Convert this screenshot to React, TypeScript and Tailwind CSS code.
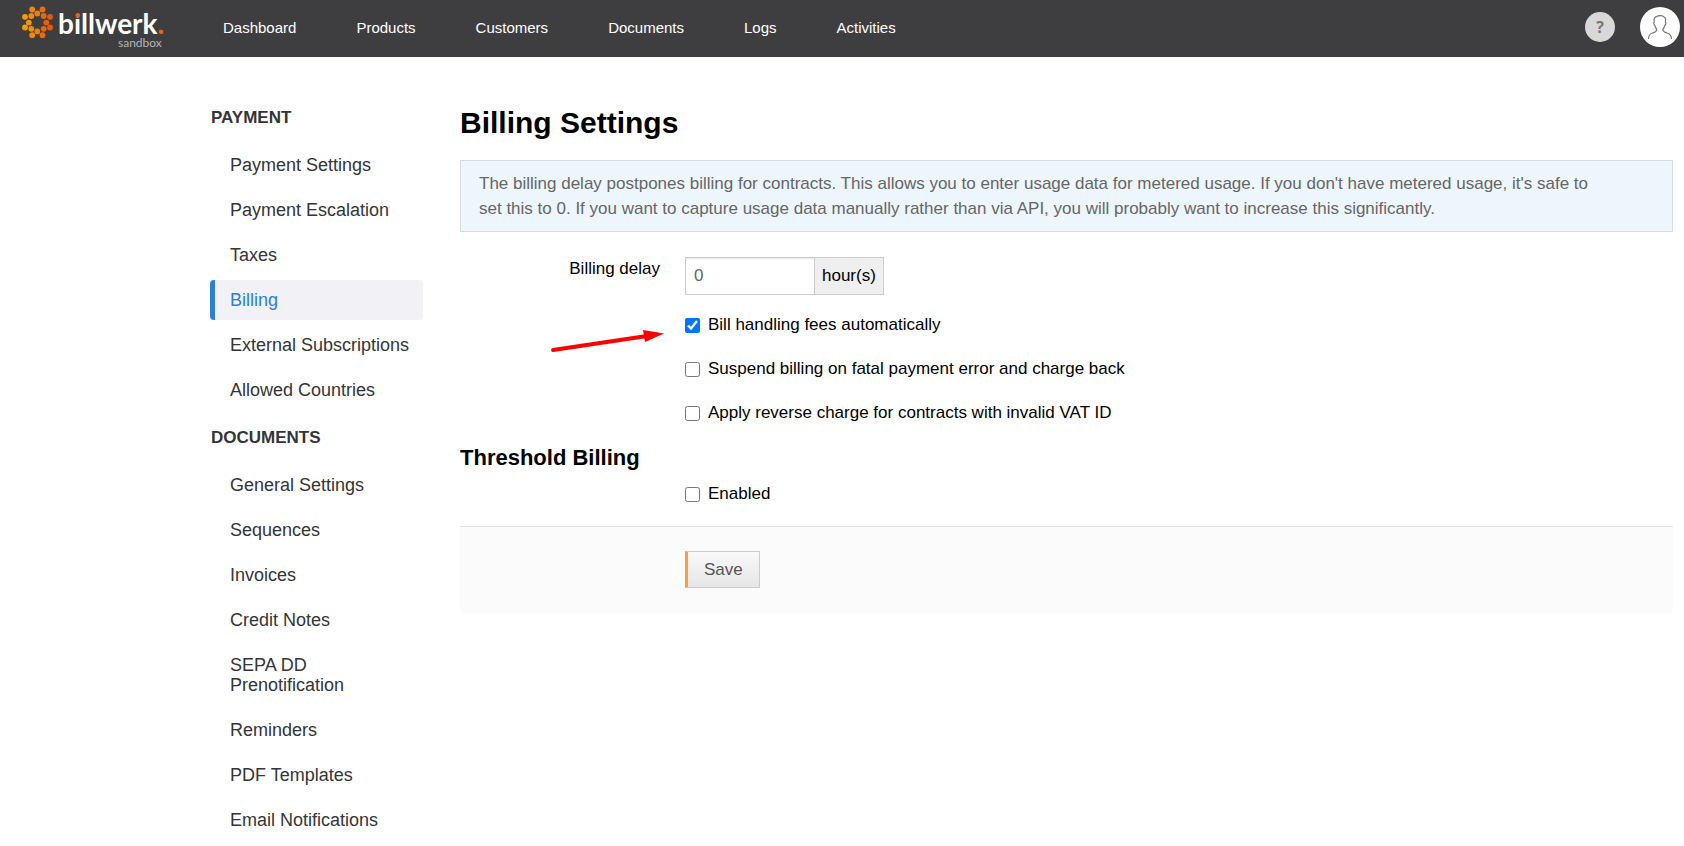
import type { ReactNode } from "react";

const navItems = ["Dashboard", "Products", "Customers", "Documents", "Logs", "Activities"];

const sections = [
  {
    title: "PAYMENT",
    items: [
      "Payment Settings",
      "Payment Escalation",
      "Taxes",
      "Billing",
      "External Subscriptions",
      "Allowed Countries",
    ],
  },
  {
    title: "DOCUMENTS",
    items: [
      "General Settings",
      "Sequences",
      "Invoices",
      "Credit Notes",
      "SEPA DD Prenotification",
      "Reminders",
      "PDF Templates",
      "Email Notifications",
    ],
  },
];

const dots = [
  { x: 32.2, y: 9.5, c: "#f08a00" },
  { x: 42.5, y: 9.5, c: "#ee6b0c" },
  { x: 37.3, y: 13.5, c: "#f07d05" },
  { x: 25, y: 16.8, c: "#f59c00" },
  { x: 31.3, y: 16, c: "#f28c00" },
  { x: 43.7, y: 16, c: "#ec6608" },
  { x: 50, y: 16.8, c: "#e8590c" },
  { x: 28.8, y: 22.6, c: "#f59600" },
  { x: 46.3, y: 22.6, c: "#ea600a" },
  { x: 25, y: 27.5, c: "#f59c00" },
  { x: 31.3, y: 28.8, c: "#f39200" },
  { x: 43.7, y: 28.8, c: "#ec6608" },
  { x: 50, y: 27.5, c: "#e8590c" },
  { x: 37.3, y: 31.4, c: "#f07d05" },
  { x: 32.2, y: 35.2, c: "#f08a00" },
  { x: 42.5, y: 35.2, c: "#ee6b0c" },
];

function Logo() {
  return (
    <a href="#" aria-label="billwerk sandbox" className="block shrink-0">
      <svg width="193" height="57" viewBox="0 0 193 57">
        <defs>
          {/* orange dot on the i, white stem */}
          <linearGradient id="dot" gradientUnits="userSpaceOnUse" x1="0" y1="0" x2="0" y2="57">
            <stop offset="0.3" stopColor="#ec6608" />
            <stop offset="0.3" stopColor="#fff" />
          </linearGradient>
        </defs>
        {dots.map((d) => (
          <circle key={`${d.x}-${d.y}`} cx={d.x} cy={d.y} r="2.9" fill={d.c} />
        ))}
        <text x="58" y="34" fontFamily="Lato, sans-serif" fontSize="28" fontWeight="700" fill="#fff">
          b<tspan fill="url(#dot)">i</tspan>llwerk<tspan fill="#ec6608">.</tspan>
        </text>
        <text x="118" y="47" fontFamily="Lato, sans-serif" fontSize="12" fill="#b5b5b5">
          sandbox
        </text>
      </svg>
    </a>
  );
}

function Header() {
  return (
    <header className="flex h-[57px] items-center bg-[#3e3e40]">
      <Logo />
      <nav className="flex flex-1 text-[15px] text-white">
        {navItems.map((item) => (
          <a key={item} href="#" className="px-[30px]">
            {item}
          </a>
        ))}
      </nav>
      <div className="flex items-center gap-[25px] pr-1 pb-[3px]">
        <button
          type="button"
          className="size-[30px] rounded-full bg-[#d8d8d8] font-['Open_Sans',sans-serif] text-base font-bold text-[#77777a]"
        >
          ?
        </button>
        <button
          type="button"
          aria-label="Account"
          className="flex size-10 items-center justify-center rounded-full bg-white"
        >
          <svg width="26" height="26" viewBox="0 0 26 26" fill="none" stroke="#77777a" strokeWidth="1.2">
            <path d="M1.500 25c0-4 1.200-5 4-6 2.700-.9 4.200-1.300 4.200-3.300 0-1-1.500-2.200-1.900-4.400-1-.4-1.500-2.800-.6-3.400C6.600 4.500 7.700 2.900 9.600 2.600c2.200-1.600 6-1.300 7.500.4 1.600.8 1.700 2.900 1.300 4.900.9.600.4 3-.6 3.400-.4 2.200-1.900 3.400-1.900 4.400 0 2 1.500 2.400 4.200 3.300 2.800 1 4.400 2 4.400 6" />
          </svg>
        </button>
      </div>
    </header>
  );
}

function Sidebar() {
  return (
    <aside className="w-[213px] shrink-0 pt-[51px] text-lg leading-5 text-[#333538]">
      {sections.map((section) => (
        <section key={section.title} className="mb-[18px]">
          <h2 className="mb-[17px] pl-px text-[17px] leading-5 font-bold">{section.title}</h2>
          <ul className="flex flex-col gap-[5px]">
            {section.items.map((item) => (
              <li key={item}>
                <a
                  href="#"
                  className={
                    item === "Billing"
                      ? "block rounded-[4px] border-l-[5px] border-[#2f7ed8] bg-[#f1f1f6] py-[10px] pr-1 pl-[15px] text-[#2f7ed8]"
                      : "block border-l-[5px] border-transparent py-[10px] pr-1 pl-[15px]"
                  }
                >
                  {item}
                </a>
              </li>
            ))}
          </ul>
        </section>
      ))}
    </aside>
  );
}

function CheckRow({ children, checked = false }: { children: ReactNode; checked?: boolean }) {
  return (
    <label className="flex w-fit items-center gap-2 leading-6">
      <input type="checkbox" defaultChecked={checked} className="size-[15px]" />
      {children}
    </label>
  );
}

function Arrow() {
  return (
    <svg className="absolute top-[17px] left-[-136px]" width="116" height="24" viewBox="0 0 116 24">
      <path d="M4 20 98 6" stroke="#f00" strokeWidth="4" strokeLinecap="round" />
      <path d="M94 0 115 3.500 96 12z" fill="#f00" />
    </svg>
  );
}

export default function App() {
  return (
    <div className="min-h-screen bg-white font-['Liberation_Sans',Arial,sans-serif] text-black">
      <Header />
      <div className="flex gap-[37px] pr-[11px] pl-[210px]">
        <Sidebar />
        <main className="min-w-0 flex-1 pt-[46px] text-[17px]">
          <h1 className="text-[30px] leading-10 font-bold">Billing Settings</h1>
          <p className="mt-[17px] border border-[#d9dcde] bg-[#edf6fc] py-[10px] pr-[60px] pl-[18px] leading-[25px] text-[#666]">
            The billing delay postpones billing for contracts. This allows you to enter usage data for
            metered usage. If you don't have metered usage, it's safe to set this to 0. If you want to
            capture usage data manually rather than via API, you will probably want to increase this
            significantly.
          </p>
          <form onSubmit={(e) => e.preventDefault()}>
            <div className="mt-[25px] flex gap-[25px]">
              <label htmlFor="delay" className="w-[200px] shrink-0 text-right leading-6">
                Billing delay
              </label>
              <div className="flex h-[38px] border border-[#ccc]">
                <input
                  id="delay"
                  type="text"
                  defaultValue="0"
                  className="w-[129px] border-r border-[#ccc] px-2 text-[#666] shadow-[inset_0_1px_1px_rgba(0,0,0,0.08)]"
                />
                <span className="flex items-center bg-[#efefef] px-[7px]">hour(s)</span>
              </div>
            </div>
            <div className="relative mt-[18px] ml-[225px] flex flex-col gap-5">
              <Arrow />
              <CheckRow checked>Bill handling fees automatically</CheckRow>
              <CheckRow>Suspend billing on fatal payment error and charge back</CheckRow>
              <CheckRow>Apply reverse charge for contracts with invalid VAT ID</CheckRow>
            </div>
            <h2 className="mt-[21px] text-[22px] leading-6 font-bold">Threshold Billing</h2>
            <div className="mt-3 ml-[225px]">
              <CheckRow>Enabled</CheckRow>
            </div>
            <div className="mt-5 border-t border-[#e2e2e2] bg-[#fbfbfb] pt-6 pb-[25px] pl-[225px]">
              <button
                type="submit"
                className="h-[37px] border border-l-[3px] border-[#ccc] border-l-[#f79f45] bg-linear-to-b from-[#f9f9f9] to-[#e6e6e6] px-4 text-[#555]"
              >
                Save
              </button>
            </div>
          </form>
        </main>
      </div>
    </div>
  );
}
